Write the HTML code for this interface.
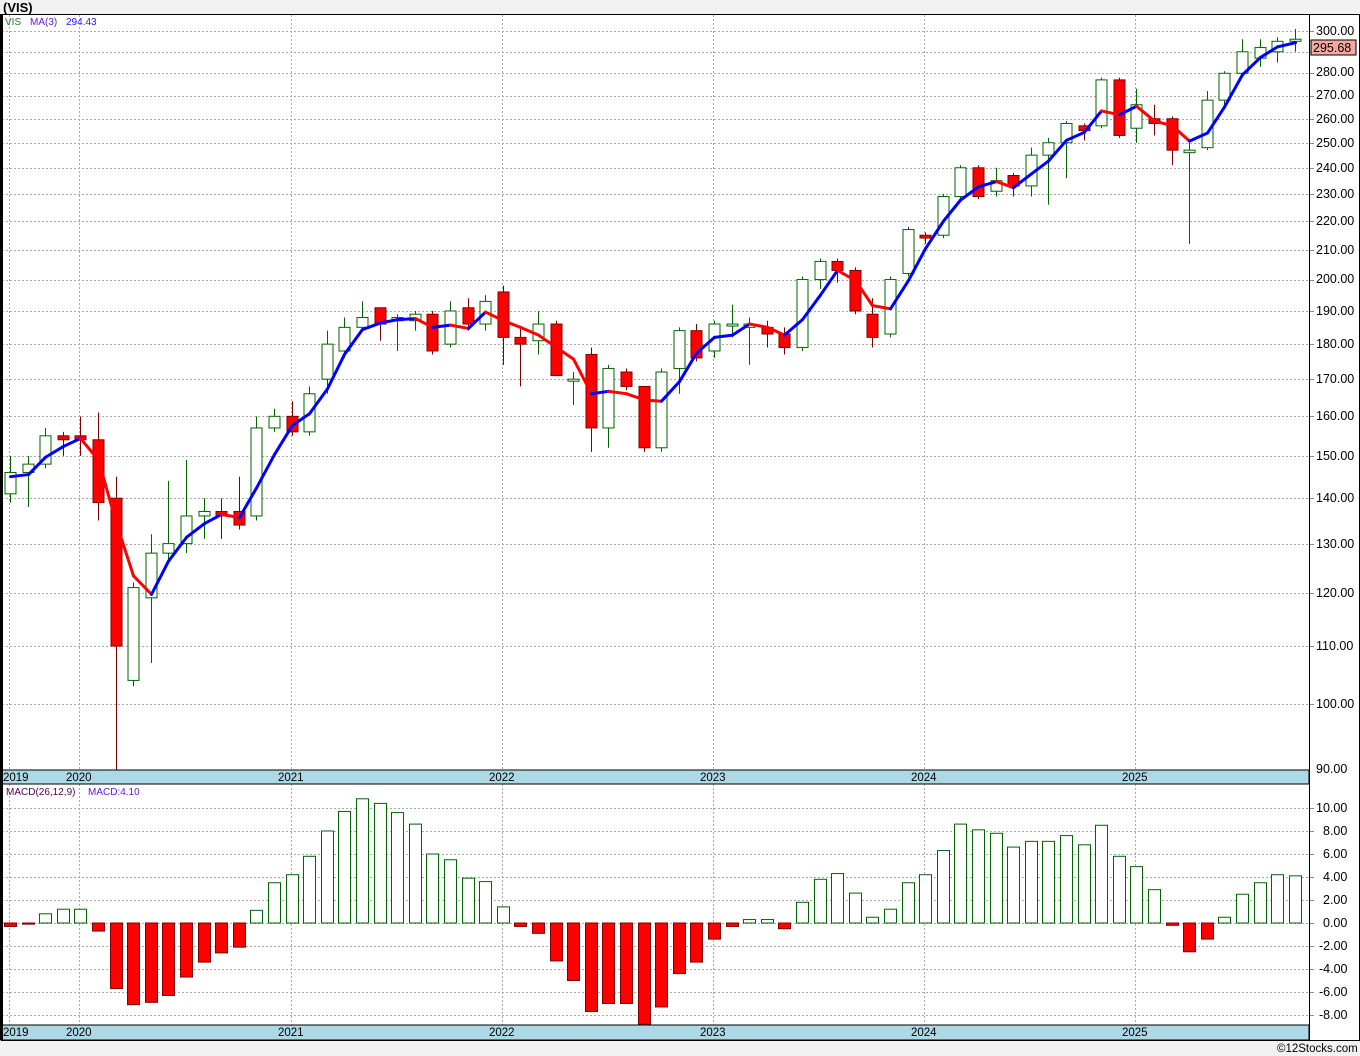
<!DOCTYPE html>
<html><head><meta charset="utf-8"><style>
html,body{margin:0;padding:0;background:#f2f2f2;width:1360px;height:1056px;overflow:hidden}
svg{display:block;font-family:"Liberation Sans","DejaVu Sans",sans-serif}
</style></head><body>
<svg id="s" width="1360" height="1056" xmlns="http://www.w3.org/2000/svg">
<rect x="0" y="0" width="1360" height="1056" fill="#f2f2f2"/>
<text x="3" y="12" font-size="13" font-weight="bold" fill="#000">(VIS)</text>
<rect x="1" y="14" width="1308" height="1026" fill="#fff"/>
<rect x="1309" y="14" width="51" height="1026" fill="#fff"/>
<g id="grid" stroke="#aaa" stroke-dasharray="2,2" stroke-width="1"></g>
<g id="plot"></g>
<rect x="1" y="770" width="1308" height="14" fill="#add8e6" stroke="#000"/>
<rect x="1" y="1025" width="1308" height="15" fill="#add8e6" stroke="#000"/>
<g font-size="11.5" fill="#000">
<text x="3" y="781">2019</text><text x="66" y="781">2020</text><text x="278" y="781">2021</text><text x="489" y="781">2022</text><text x="700" y="781">2023</text><text x="911" y="781">2024</text><text x="1122" y="781">2025</text>
<text x="3" y="1036">2019</text><text x="66" y="1036">2020</text><text x="278" y="1036">2021</text><text x="489" y="1036">2022</text><text x="700" y="1036">2023</text><text x="911" y="1036">2024</text><text x="1122" y="1036">2025</text>
</g>
<line x1="1" y1="14.5" x2="1360" y2="14.5" stroke="#000"/>
<line x1="1.5" y1="14" x2="1.5" y2="1040" stroke="#000" stroke-width="3"/>
<line x1="1309.5" y1="14" x2="1309.5" y2="1040" stroke="#000"/>
<line x1="1359.5" y1="14" x2="1359.5" y2="1040" stroke="#000"/>
<line x1="1" y1="1040.5" x2="1360" y2="1040.5" stroke="#000"/>
<text x="5" y="25" font-size="10" fill="#2a7a2a">VIS</text>
<text x="30" y="25" font-size="10" fill="#6a1ad0">MA(3)</text>
<text x="66" y="25" font-size="10" fill="#1a1aff">294.43</text>
<text x="6" y="795" font-size="10" fill="#500050">MACD(26,12,9)</text>
<text x="88" y="795" font-size="10" fill="#6a1ad0">MACD:4.10</text>
<g font-size="12.5" fill="#000" id="ax">
<text x="1316" y="35">300.00</text><text x="1316" y="76">280.00</text><text x="1316" y="99">270.00</text><text x="1316" y="123">260.00</text><text x="1316" y="147">250.00</text><text x="1316" y="172">240.00</text><text x="1316" y="198">230.00</text><text x="1316" y="225">220.00</text><text x="1316" y="254">210.00</text><text x="1316" y="283">200.00</text><text x="1316" y="315">190.00</text><text x="1316" y="348">180.00</text><text x="1316" y="383">170.00</text><text x="1316" y="420">160.00</text><text x="1316" y="460">150.00</text><text x="1316" y="502">140.00</text><text x="1316" y="548">130.00</text><text x="1316" y="597">120.00</text><text x="1316" y="650">110.00</text><text x="1316" y="708">100.00</text><text x="1316" y="773">90.00</text>
<text x="1316" y="812">10.00</text><text x="1323" y="835">8.00</text><text x="1323" y="858">6.00</text><text x="1323" y="881">4.00</text><text x="1323" y="904">2.00</text><text x="1323" y="927">0.00</text><text x="1319" y="950">-2.00</text><text x="1319" y="973">-4.00</text><text x="1319" y="996">-6.00</text><text x="1319" y="1019">-8.00</text>
</g>
<rect x="1311" y="40" width="45" height="15" fill="#f4a8a0" stroke="#000"/>
<text x="1313" y="52" font-size="12.5" fill="#000">295.68</text>
<text x="1277" y="1052" font-size="11.5" fill="#000">©12Stocks.com</text>
</svg>
<script>
var NS="http://www.w3.org/2000/svg",g=document.getElementById('plot'),gr=document.getElementById('grid');
function el(t,a,p){var e=document.createElementNS(NS,t);for(var k in a)e.setAttribute(k,a[k]);(p||g).appendChild(e);return e;}
function py(p){return 31+613*Math.log(300/p);}
function my(v){return 923-11.5*v;}
[300,290,280,270,260,250,240,230,220,210,200,190,180,170,160,150,140,130,120,110,100].forEach(function(p){var y=Math.round(py(p))+.5;el('line',{x1:2,y1:y,x2:1309,y2:y},gr);el('line',{x1:1309,y1:y,x2:1314,y2:y,stroke:'#888','stroke-dasharray':'none'},gr);});
[10,8,6,4,2,0,-2,-4,-6,-8].forEach(function(v){var y=Math.round(my(v))+.5;el('line',{x1:2,y1:y,x2:1309,y2:y},gr);el('line',{x1:1309,y1:y,x2:1314,y2:y,stroke:'#888','stroke-dasharray':'none'},gr);});
[9,79,291,502,713,924,1135].forEach(function(x){el('line',{x1:x+.5,y1:15,x2:x+.5,y2:770},gr);el('line',{x1:x+.5,y1:784,x2:x+.5,y2:1025},gr);});
var D=[[141,146,150,139],[146,148,150,138],[148,155,157,147],[155,154,156,150],[155,154,160,150],[154,139,161,135],[140,110,145,89],[104,121,122,103],[119,128,132,107],[128,130,144,126],[130,136,149,128],[136,137,140,131],[137,136,140,131],[137,134,145,133],[136,157,160,135],[157,160,162,156],[160,156,164,155],[156,166,168,155],[170,180,184,166],[178,185,188,176],[185,188,193,184],[191,186,191,181],[187,188,189,178],[187,189,190,184],[189,178,190,177],[180,190,193,179],[191,186,194,184],[186,193,195,184],[196,182,198,174],[182,180,185,168],[181,186,190,177],[186,171,187,171],[170,170,172,163],[177,157,179,151],[157,173,174,152],[172,168,173,167],[168,152,168,151],[152,172,173,151],[173,184,185,166],[184,176,186,175],[178,186,187,176],[186,186,192,182],[185,186,188,174],[185,183,187,179],[183,179,185,177],[179,200,201,178],[200,206,207,197],[206,203,207,199],[203,190,204,189],[189,182,194,179],[183,200,201,182],[202,217,218,201],[215,214,216,212],[215,229,230,214],[229,240,241,228],[240,229,241,228],[231,235,240,229],[237,233,238,229],[233,245,248,229],[245,250,252,226],[250,258,259,236],[257,255,258,251],[257,277,278,256],[277,253,278,252],[256,266,273,250],[260,258,266,253],[260,247,261,241],[246,247,250,212],[248,268,272,247],[268,280,281,266],[280,290,296,278],[287,292,296,283],[290,295,297,285],[295,296,301,290]];
var M=[-0.3,-0.1,0.8,1.2,1.2,-0.7,-5.7,-7.1,-6.9,-6.3,-4.7,-3.4,-2.6,-2.1,1.1,3.5,4.2,5.8,8.0,9.7,10.8,10.4,9.6,8.6,6.0,5.5,3.9,3.6,1.4,-0.3,-0.9,-3.3,-5.0,-7.7,-7.0,-7.0,-8.8,-7.3,-4.4,-3.4,-1.4,-0.3,0.3,0.3,-0.5,1.8,3.8,4.3,2.6,0.5,1.2,3.5,4.2,6.3,8.6,8.1,7.8,6.6,7.1,7.1,7.6,6.8,8.5,5.8,4.9,2.9,-0.2,-2.5,-1.4,0.5,2.5,3.5,4.2,4.1];
function cx(i){return Math.round(10+i*17.6);}
D.forEach(function(d,i){var x=cx(i),up=d[1]>=d[0],col=up?'#006400':'#800000';
el('line',{x1:x+.5,y1:py(d[2]),x2:x+.5,y2:py(d[3]),stroke:col});
var t=py(Math.max(d[0],d[1])),b=py(Math.min(d[0],d[1]));if(b-t<2)b=t+2;
el('rect',{x:x-5,y:t,width:11,height:b-t,fill:up?'#fff':'#ff0000',stroke:col});});
var ma=[];D.forEach(function(d,i){if(i<2){ma.push(null);return;}ma.push((D[i][1]+D[i-1][1]+D[i-2][1])/3);});
ma[0]=145;ma[1]=145.5;
for(var i=1;i<D.length;i++){var c=ma[i]>=ma[i-1]?'#0000ff':'#ff0000';el('line',{x1:cx(i-1)+.5,y1:py(ma[i-1]),x2:cx(i)+.5,y2:py(ma[i]),stroke:c,'stroke-width':3,'stroke-linecap':'round'});}
M.forEach(function(v,i){var x=cx(i);var y0=my(0),y1=my(v);
if(v>=0)el('rect',{x:x-5.5,y:y1,width:12,height:Math.max(y0-y1,1),fill:'#fff',stroke:'#006400'});
else el('rect',{x:x-5.5,y:y0,width:12,height:Math.max(y1-y0,1),fill:'#ff0000',stroke:'#800000'});});
</script>
</body></html>
